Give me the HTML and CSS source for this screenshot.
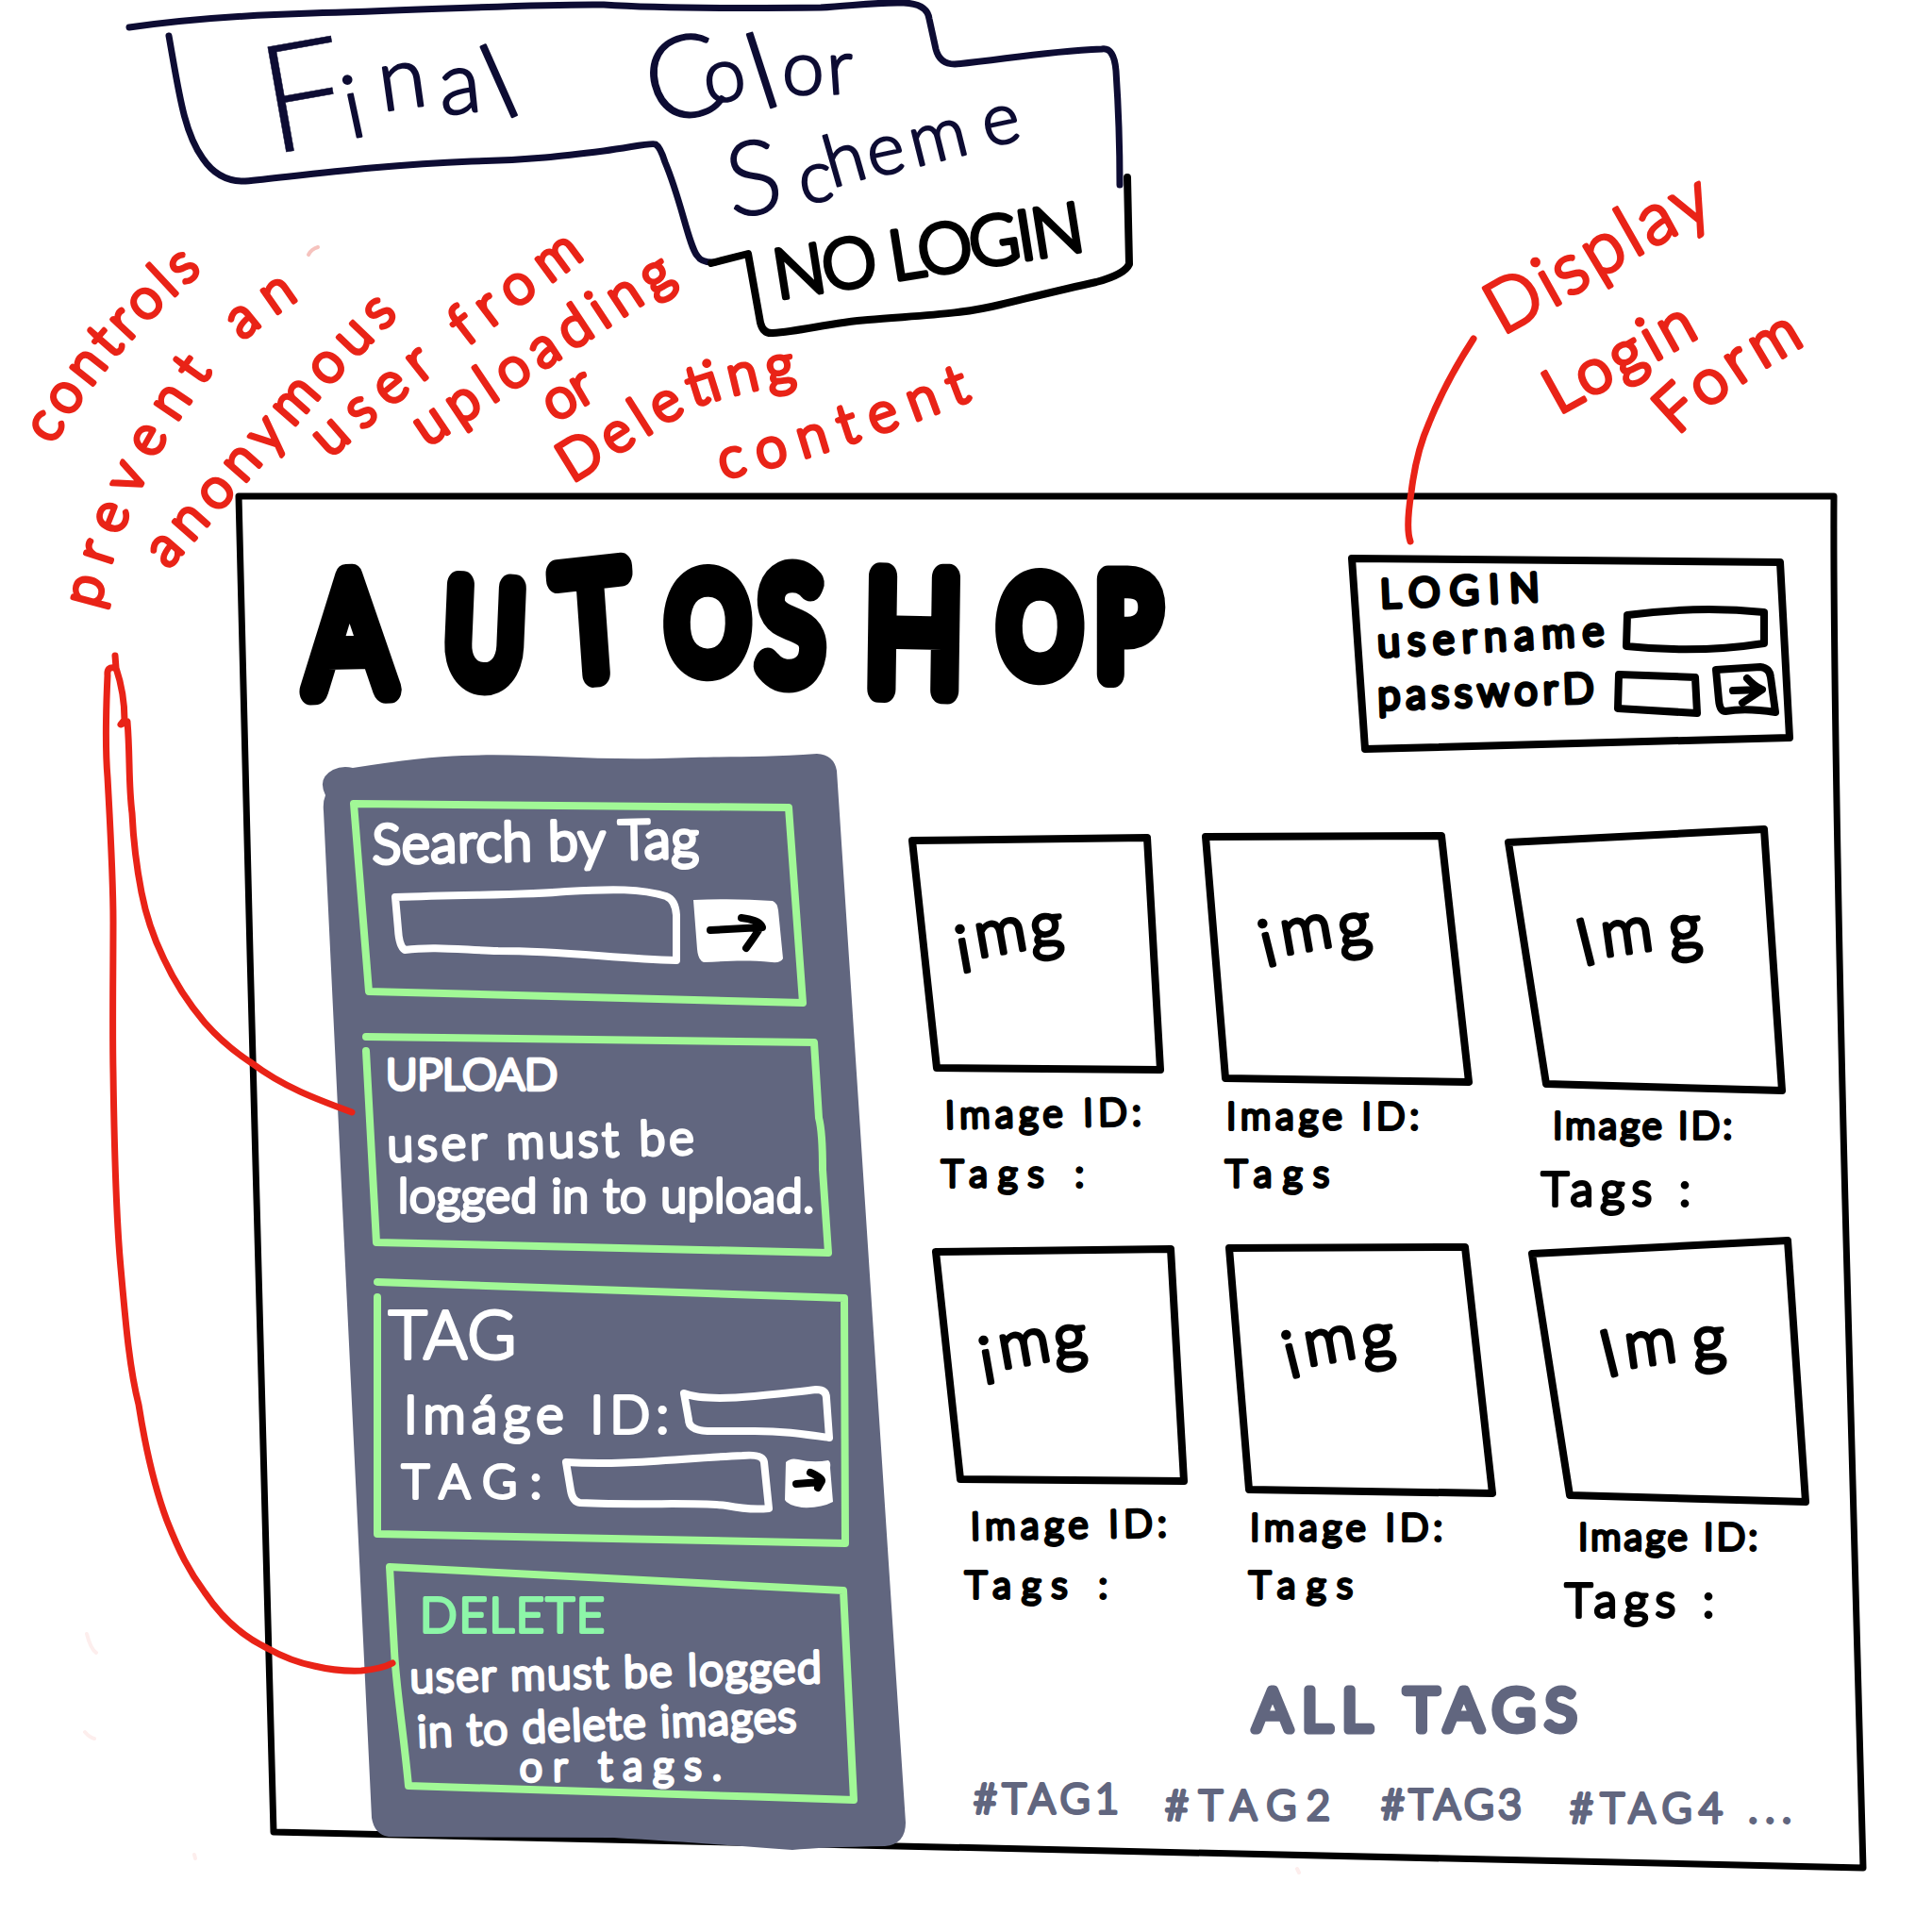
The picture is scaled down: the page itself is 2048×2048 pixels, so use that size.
FILE: index.html
```html
<!DOCTYPE html>
<html lang="en">
<head>
<meta charset="utf-8">
<title>Autoshop – final color scheme, no login</title>
<link rel="stylesheet" href="styles.css">
</head>
<body>
<div class="sheet">
  <header class="notes">
    <svg class="drawing" viewBox="0 0 2048 525" width="2048" height="525">
      <g class="line navy">
        <path d="M137 29C200 20 260 16 330 14C450 11 560 4 640 5C700 9 780 9 870 8C905 6 930 2 958 3Q983 4 985 20L992 52Q996 68 1012 68C1060 64 1100 55 1168 52Q1181 50 1183 75C1186 120 1187 160 1187 196"/>
        <path d="M179 38C190 100 195 140 215 168Q232 193 260 192C320 186 400 175 500 171C560 170 600 165 640 160C670 156 690 151 695 153Q700 156 705 172C722 212 730 260 739 271Q744 279 758 278"/>
      </g>
      <path class="line ink" d="M754 279L793 269L806 342Q809 354 819 353C850 351 880 342 920 339C980 334 1020 333 1060 323C1110 311 1130 306 1162 299Q1192 291 1197 280L1195 188"/>
      <g class="hand navy-text">
        <text class="t-final" x="287 371 405 468 534" y="164 147 118 122 128" rotate="-10 -12 -8 -6 -24"><tspan class="t-big">F</tspan>ina<tspan class="t-stem">l</tspan></text>
        <text class="t-color" x="695 749 808 829 878" y="134 110 117 100 100" rotate="-14 -8 -18 0 -4"><tspan class="t-tall">C</tspan>o<tspan class="t-stem">l</tspan>or</text>
        <text class="t-scheme" x="775 850 882 924 970 1046" y="231 216 199 188 177 156" rotate="-8 -8 -16 -12 -14 -12"><tspan class="t-cap">S</tspan>cheme</text>
      </g>
      <text class="hand ink-text t-nologin" transform="translate(824 317) rotate(-9)" textLength="332">NO LOGIN</text>

      <defs>
        <path id="n1" d="M56 472Q110 375 225 278"/>
        <path id="n2" d="M104 646C125 560 160 480 215 408C240 370 280 340 345 298"/>
        <path id="n3" d="M178 604L300 466Q355 400 440 316"/>
        <path id="n4" d="M350 486Q440 405 635 262"/>
        <path id="n5" d="M453 474Q560 402 735 287"/>
        <path id="n6" d="M588 448L646 414"/>
        <path id="n7" d="M606 512C660 480 700 450 740 430Q790 413 860 402"/>
        <path id="n8" d="M766 508C840 490 900 474 1040 420"/>
        <path id="n9" d="M1592 356L1660 318Q1740 265 1845 214"/>
        <path id="n10" d="M1652 440L1810 352"/>
        <path id="n11" d="M1778 462Q1830 410 1930 356"/>
      </defs>
      <g class="hand red-text">
        <text><textPath href="#n1" textLength="245">controls</textPath></text>
        <text><textPath href="#n2" textLength="403">prevent an</textPath></text>
        <text><textPath href="#n3" textLength="365">anonymous</textPath></text>
        <text><textPath href="#n4" textLength="345">user from</textPath></text>
        <text><textPath href="#n5" textLength="318">uploading</textPath></text>
        <text><textPath href="#n6" textLength="54">or</textPath></text>
        <text><textPath href="#n7" textLength="265">Deleting</textPath></text>
        <text><textPath href="#n8" textLength="278">content</textPath></text>
        <text class="t-display"><textPath href="#n9" textLength="262">Display</textPath></text>
        <text class="t-side"><textPath href="#n10" textLength="172">Login</textPath></text>
        <text class="t-side"><textPath href="#n11" textLength="168">Form</textPath></text>
      </g>
    </svg>
  </header>

  <main class="site">
    <svg class="drawing backdrop" viewBox="253 525 1722 1455" width="1722" height="1455">
      <path class="line frame" d="M253 526L1944 526C1943 700 1951 1100 1958 1350C1963 1600 1971 1800 1975 1980L290 1942C285 1600 262 1000 253 526Z"/>
    </svg>

    <header class="site-header">
      <h1>
        <svg class="drawing" viewBox="300 525 980 272" width="980" height="272">
          <text class="hand ink-text t-logo" transform="scale(.8 1)" x="409 588 745 884 1006 1146 1324 1453" y="733 719 718 705 719 730 709 715" rotate="-1 3 -5 2 0 1 2 0"><tspan class="l-xl">A</tspan><tspan class="l-m">U</tspan><tspan class="l-l">T</tspan><tspan class="l-s">O</tspan><tspan class="l-l">S</tspan><tspan class="l-xl">H</tspan><tspan class="l-s">O</tspan><tspan class="l-m">P</tspan></text>
        </svg>
      </h1>
      <section class="login">
        <svg class="drawing" viewBox="1425 525 482 272" width="482" height="272">
          <path class="line ink" d="M1433 592L1887 596L1897 782L1447 794Z"/>
          <g class="line ink">
            <path d="M1725 652Q1800 642 1870 649L1870 682Q1800 693 1724 685Z"/>
            <path d="M1716 715L1797 718L1799 756L1715 751Z"/>
            <path d="M1819 710L1866 707Q1876 708 1877 718L1882 755Q1850 750 1829 754Q1823 754 1822 742Z"/>
            <path d="M1837 732L1867 731M1852 719Q1860 728 1868 731L1847 745"/>
          </g>
          <g class="hand ink-text t-form">
            <text transform="translate(1464 644) rotate(-2.5)" textLength="168">LOGIN</text>
            <text class="t-user" transform="translate(1461 696) rotate(-3)" textLength="240">username</text>
            <text class="t-user" transform="translate(1461 752) rotate(-2)" textLength="229">passworD</text>
          </g>
        </svg>
      </section>
    </header>

    <div class="site-body">
      <aside class="sidebar">
        <svg class="drawing backdrop" viewBox="342 797 620 1183" width="620" height="1183">
          <path class="slate-fill" d="M345 843Q336 825 353 816Q363 811 374 814Q450 802 490 801C560 798 620 806 700 804C760 801 800 804 866 799Q884 800 887 817L960 1932Q960 1955 938 1957Q870 1958 840 1961C770 1956 720 1952 650 1948L412 1947Q397 1945 394 1927L343 860Q342 850 345 843Z"/>
        </svg>
        <section class="panel">
          <svg class="drawing" viewBox="342 797 620 284" width="620" height="284">
            <path class="line green" d="M375 852L836 856L851 1063L391 1051Z"/>
            <text class="hand white-text t-search" transform="translate(395 915) rotate(-1)" textLength="346">Search by Tag</text>
            <path class="line white" d="M419 951C500 948 560 949 600 945C650 942 680 942 706 950Q716 954 717 970L717 1018C650 1016 600 1008 528 1008C490 1007 460 1003 429 1007Q423 1003 422 985Z"/>
            <path class="white-fill" d="M735 954Q780 952 819 955Q824 957 825 965L830 1016Q828 1021 818 1020C790 1017 770 1019 746 1020Q740 1018 739 1006Z"/>
            <path class="line arrow" d="M753 986L808 983M786 973Q803 975 807 981Q804 987 791 1005"/>
          </svg>
        </section>
        <section class="panel">
          <svg class="drawing" viewBox="342 1081 620 261" width="620" height="261">
            <path class="line green" d="M388 1099L863 1105L868 1185Q872 1200 872 1240L878 1328L399 1317L388 1114"/>
            <g class="hand white-text t-panel">
              <text class="t-upload" x="409" y="1155" textLength="182">UPLOAD</text>
              <text transform="translate(411 1231) rotate(-1.4)" textLength="325">user must be</text>
              <text x="422" y="1285" textLength="441">logged in to upload.</text>
            </g>
          </svg>
        </section>
        <section class="panel">
          <svg class="drawing" viewBox="342 1342 620 306" width="620" height="306">
            <path class="line green" d="M400 1359L895 1376L896 1636L400 1626L400 1375"/>
            <g class="hand white-text">
              <text class="t-tagtitle" x="412" y="1440" textLength="135">TAG</text>
              <text class="t-field" x="428" y="1519" textLength="281">Imáge ID:</text>
              <text class="t-tag" x="426" y="1588" textLength="148">TAG:</text>
            </g>
            <g class="line white">
              <path d="M725 1477Q745 1485 800 1480Q850 1475 865 1473Q876 1473 876 1482L879 1524C850 1520 830 1517 800 1517L750 1517Q730 1516 730 1505Z"/>
              <path d="M600 1550C660 1554 720 1546 787 1543Q809 1541 810 1550L815 1599Q795 1601 770 1596C740 1592 680 1596 615 1593Q607 1592 605 1580Z"/>
            </g>
            <path class="white-fill" d="M833 1550Q838 1545 846 1547Q862 1551 878 1548Q881 1550 880 1556L883 1592Q870 1599 850 1598Q834 1595 832 1590Z"/>
            <path class="line arrow" d="M844 1573L870 1571M859 1561Q872 1567 871 1570L867 1577"/>
          </svg>
        </section>
        <section class="panel">
          <svg class="drawing" viewBox="342 1648 620 332" width="620" height="332">
            <path class="line green" d="M413 1661L894 1686L905 1908C750 1903 600 1898 433 1893C427 1830 420 1790 418 1750Z"/>
            <text class="hand mint-text t-delete" transform="translate(445 1730)" textLength="196">DELETE</text>
            <g class="hand white-text t-small">
              <text transform="translate(435 1794) rotate(-1.4)" textLength="436">user must be logged</text>
              <text transform="translate(443 1852) rotate(-2.4)" textLength="402">in to delete images</text>
              <text class="t-last" transform="translate(551 1888) rotate(-.5)" textLength="214">or tags.</text>
            </g>
          </svg>
        </section>
      </aside>

      <div class="content">
        <div class="gallery">
          <figure>
            <svg class="drawing" viewBox="962 873 303 436" width="303" height="436">
              <path class="line ink" d="M967 891L1216 888L1230 1134L993 1132Z"/>
              <g class="hand ink-text">
                <text class="t-img" x="1018 1037 1094" y="1031 1015 1006" rotate="-10 -10 -6">img</text>
                <text class="t-caption" transform="translate(1002 1196) rotate(-1)" textLength="208">Image ID:</text>
                <text class="t-caption" x="998" y="1258" textLength="151">Tags :</text>
              </g>
            </svg>
          </figure>
          <figure>
            <svg class="drawing" viewBox="1265 873 320 436" width="320" height="436">
              <path class="line ink" d="M1278 887L1528 886L1557 1147L1299 1143Z"/>
              <g class="hand ink-text">
                <text class="t-img" x="1342 1361 1421" y="1025 1012 1006" rotate="-14 -10 -8">img</text>
                <text class="t-caption" x="1300" y="1197" textLength="204">Image ID:</text>
                <text class="t-caption" x="1299" y="1258" textLength="110">Tags</text>
              </g>
            </svg>
          </figure>
          <figure>
            <svg class="drawing" viewBox="1585 873 390 436" width="390" height="436">
              <path class="line ink" d="M1599 893L1870 879L1889 1156L1639 1149Z"/>
              <g class="hand ink-text">
                <text class="t-img" x="1678 1700 1771" y="1024 1014 1008" rotate="-14 -8 -6">Img</text>
                <text class="t-caption" x="1646" y="1207" textLength="190">Image ID:</text>
                <text class="t-caption-lg" x="1634" y="1278" textLength="158">Tags :</text>
              </g>
            </svg>
          </figure>
          <figure>
            <svg class="drawing" viewBox="937 873 303 436" width="303" height="436">
              <path class="line ink" d="M967 891L1216 888L1230 1134L993 1132Z"/>
              <g class="hand ink-text">
                <text class="t-img" x="1018 1037 1094" y="1031 1015 1006" rotate="-10 -10 -6">img</text>
                <text class="t-caption" transform="translate(1004 1196) rotate(-1)" textLength="208">Image ID:</text>
                <text class="t-caption" x="998" y="1258" textLength="151">Tags :</text>
              </g>
            </svg>
          </figure>
          <figure>
            <svg class="drawing" viewBox="1240 873 320 436" width="320" height="436">
              <path class="line ink" d="M1278 887L1528 886L1557 1147L1299 1143Z"/>
              <g class="hand ink-text">
                <text class="t-img" x="1342 1361 1421" y="1025 1012 1006" rotate="-14 -10 -8">img</text>
                <text class="t-caption" x="1300" y="1197" textLength="204">Image ID:</text>
                <text class="t-caption" x="1299" y="1258" textLength="110">Tags</text>
              </g>
            </svg>
          </figure>
          <figure>
            <svg class="drawing" viewBox="1560 873 390 436" width="390" height="436">
              <path class="line ink" d="M1599 893L1870 879L1889 1156L1639 1149Z"/>
              <g class="hand ink-text">
                <text class="t-img" x="1678 1700 1771" y="1024 1014 1008" rotate="-14 -8 -6">Img</text>
                <text class="t-caption" x="1648" y="1207" textLength="190">Image ID:</text>
                <text class="t-caption-lg" x="1634" y="1278" textLength="158">Tags :</text>
              </g>
            </svg>
          </figure>
        </div>
        <section class="tags">
          <svg class="drawing" viewBox="962 1745 1013 235" width="1013" height="235">
            <g class="hand slate-text">
              <text class="t-alltags" x="1329" y="1834" textLength="342">ALL TAGS</text>
              <g class="t-hashtag">
                <text x="1032" y="1922" textLength="154">#TAG1</text>
                <text x="1235" y="1929" textLength="175">#TAG2</text>
                <text x="1464" y="1928" textLength="149">#TAG3</text>
                <text x="1664" y="1932" textLength="235">#TAG4 ...</text>
              </g>
            </g>
          </svg>
        </section>
      </div>
    </div>
  </main>

  <svg class="drawing pointers" viewBox="0 0 2048 2048" width="2048" height="2048">
    <g class="line red">
      <path d="M1562 359C1540 393 1527 418 1515 448C1503 475 1498 505 1496 522Q1490 560 1495 574"/>
      <path d="M122 695L123 708Q132 735 132 763L128 768L135 765C138 800 136 830 140 862Q142 905 150 946Q157 982 173 1015Q190 1052 217 1084Q239 1109 267 1127C300 1152 335 1165 373 1179"/>
      <path d="M122 708Q113 706 114 716C112 760 112 800 114 824C117 880 120 930 120 977C120 1030 119 1090 120 1137C121 1210 123 1290 128 1344C133 1400 137 1450 147 1489C155 1540 165 1580 177 1612C190 1645 200 1665 217 1688C235 1715 258 1735 283 1747Q308 1761 333 1766Q358 1772 383 1771Q405 1769 416 1763"/>
    </g>
    <g class="smudge">
      <path d="M327 270Q330 264 337 262"/>
      <path class="faint" d="M92 1732Q96 1748 102 1752M90 1836Q95 1842 100 1843M206 1966L207 1970M1375 1981L1377 1985"/>
    </g>
  </svg>
</div>
</body>
</html>
```
FILE: styles.css
```css
:root {
  --ink: #000;
  --navy: #0d0c33;
  --red: #e92317;
  --slate: #61667f;
  --green: #a1f896;
  --mint: #8df6a8;
}

* { box-sizing: border-box; }

body {
  margin: 0;
  background: #fff;
  font-family: Lato, "Open Sans", sans-serif;
}

h1, figure { margin: 0; }

.sheet {
  position: relative;
  width: 2048px;
  height: 2048px;
  overflow: hidden;
}

.drawing {
  display: block;
  overflow: visible;
}

.notes { height: 525px; }

.site {
  position: relative;
  display: grid;
  grid-template-rows: 272px 1183px;
  width: 1722px;
  margin-left: 253px;
}

.backdrop {
  position: absolute;
  top: 0;
  left: 0;
}

.site-header {
  position: relative;
  display: flex;
  justify-content: space-between;
  padding: 0 68px 0 47px;
}

.site-body {
  display: grid;
  grid-template-columns: 620px 1fr;
  padding-left: 89px;
}

.sidebar {
  position: relative;
  display: flex;
  flex-direction: column;
}

.panel { position: relative; }

.content {
  position: relative;
  padding-top: 76px;
}

.gallery {
  display: grid;
  grid-template-columns: 303px 320px 390px;
  grid-auto-rows: 436px;
}

.pointers {
  position: absolute;
  top: 0;
  left: 0;
  pointer-events: none;
}

/* Pen strokes */
.line {
  fill: none;
  stroke-width: 8px;
  stroke-linecap: round;
  stroke-linejoin: round;
}
.ink { stroke: var(--ink); }
.frame { stroke: var(--ink); stroke-width: 7px; }
.navy { stroke: var(--navy); stroke-width: 7px; }
.red { stroke: var(--red); stroke-width: 7px; }
.green { stroke: var(--green); }
.white { stroke: #fff; }
.arrow { stroke: var(--ink); }
.slate-fill { fill: var(--slate); }
.white-fill { fill: #fff; }
.smudge {
  fill: none;
  stroke: #f6c3be;
  stroke-width: 4px;
  stroke-linecap: round;
}
.faint { stroke: #fdeeed; }

/* Marker lettering: light glyphs thickened with a round stroke */
.hand {
  font-weight: 300;
  stroke-width: 4px;
  stroke-linejoin: round;
  stroke-linecap: round;
}
.ink-text { fill: var(--ink); stroke: var(--ink); }
.navy-text { fill: var(--navy); stroke: var(--navy); stroke-width: 2.5px; }
.red-text { fill: var(--red); stroke: var(--red); stroke-width: 4.5px; font-size: 59px; }
.white-text { fill: #fff; stroke: #fff; }
.mint-text { fill: var(--mint); stroke: var(--mint); }
.slate-text { fill: var(--slate); stroke: var(--slate); }

.t-final { font-size: 92px; }
.t-big { font-size: 160px; stroke-width: .5px; }
.t-stem { font-size: 112px; }
.t-color { font-size: 80px; }
.t-tall { font-size: 122px; stroke-width: 1.5px; }
.t-scheme { font-size: 76px; }
.t-cap { font-size: 110px; stroke-width: 1.5px; }
.t-nologin { font-size: 73px; stroke-width: 5px; }
.t-display { font-size: 76px; stroke-width: 4px; }
.t-side { font-size: 66px; }

.t-logo { font-size: 150px; stroke-width: 29px; }
.l-s { font-size: 132px; }
.l-m { font-size: 142px; }
.l-l { font-size: 156px; }
.l-xl { font-size: 169px; }

.t-form { font-size: 41px; stroke-width: 5.5px; }
.t-user { font-size: 43px; stroke-width: 5px; }
.t-search { font-size: 57px; stroke-width: 4.5px; }
.t-panel { font-size: 50px; }
.t-upload { font-size: 46px; stroke-width: 4.5px; }
.t-tagtitle { font-size: 70px; }
.t-field { font-size: 56px; }
.t-tag { font-size: 50px; }
.t-delete { font-size: 52px; }
.t-small { font-size: 46px; }
.t-last { font-size: 43px; }
.t-img { font-size: 68px; stroke-width: 4.5px; }
.t-caption { font-size: 40px; }
.t-caption-lg { font-size: 50px; }
.t-alltags { font-size: 61px; stroke-width: 9px; }
.t-hashtag { font-size: 43px; }
```
